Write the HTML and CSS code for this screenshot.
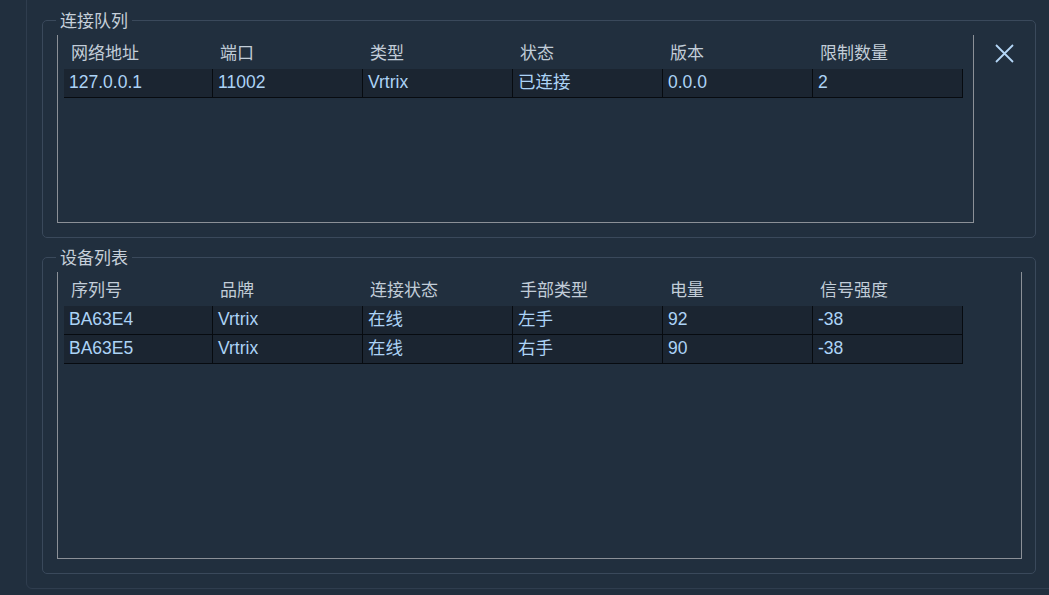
FILE: index.html
```html
<!DOCTYPE html>
<html lang="zh">
<head>
<meta charset="utf-8">
<title>连接队列</title>
<link rel="stylesheet" href="styles.css">
</head>
<body>
<div class="page">
  <div class="frame">
    <fieldset class="group group-queue">
      <legend>连接队列</legend>
      <div class="group-body">
        <div class="table-box box-queue">
          <div class="grid head">
            <div class="hcell">网络地址</div>
            <div class="hcell">端口</div>
            <div class="hcell">类型</div>
            <div class="hcell">状态</div>
            <div class="hcell">版本</div>
            <div class="hcell">限制数量</div>
          </div>
          <div class="grid row">
            <div class="cell">127.0.0.1</div>
            <div class="cell">11002</div>
            <div class="cell">Vrtrix</div>
            <div class="cell">已连接</div>
            <div class="cell">0.0.0</div>
            <div class="cell">2</div>
          </div>
        </div>
        <button class="close" type="button" aria-label="关闭">
          <svg width="19" height="19" viewBox="0 0 19 19"><path d="M1 1 L18 18 M18 1 L1 18" stroke="#b4d6f6" stroke-width="1.8" fill="none"/></svg>
        </button>
      </div>
    </fieldset>
    <fieldset class="group group-devices">
      <legend>设备列表</legend>
      <div class="group-body">
        <div class="table-box box-devices">
          <div class="grid head">
            <div class="hcell">序列号</div>
            <div class="hcell">品牌</div>
            <div class="hcell">连接状态</div>
            <div class="hcell">手部类型</div>
            <div class="hcell">电量</div>
            <div class="hcell">信号强度</div>
          </div>
          <div class="grid row">
            <div class="cell">BA63E4</div>
            <div class="cell">Vrtrix</div>
            <div class="cell">在线</div>
            <div class="cell">左手</div>
            <div class="cell">92</div>
            <div class="cell">-38</div>
          </div>
          <div class="grid row">
            <div class="cell">BA63E5</div>
            <div class="cell">Vrtrix</div>
            <div class="cell">在线</div>
            <div class="cell">右手</div>
            <div class="cell">90</div>
            <div class="cell">-38</div>
          </div>
        </div>
      </div>
    </fieldset>
  </div>
</div>
</body>
</html>
```
FILE: styles.css
```css
html, body {
  margin: 0;
  padding: 0;
  background: #212f3e;
  overflow: hidden;
}

body {
  font-family: "Liberation Sans", "Noto Sans CJK SC", sans-serif;
  font-size: 17px;
}

.page {
  width: 1049px;
  height: 595px;
  padding-left: 26px;
  box-sizing: border-box;
  overflow: hidden;
}

.frame {
  margin-top: -10px;
  width: 1030px;
  border: 1px solid #2f3d4e;
  border-radius: 6px;
  padding: 19px 0 14px 15px;
  box-sizing: border-box;
}

.group {
  margin: 0;
  width: 994px;
  box-sizing: border-box;
  border: 1px solid #3a495b;
  border-radius: 5px;
  padding: 5px 13px 14px 14px;
  min-width: 0;
}

.group-devices {
  margin-top: 9px;
}

.group legend {
  margin-left: -1px;
  padding: 0 4px;
  font-family: "Noto Sans CJK SC", sans-serif;
  font-size: 17px;
  line-height: 20px;
  color: #c6d0da;
}

.group-body {
  display: flex;
  align-items: flex-start;
}

.table-box {
  border: 1px solid #8b9097;
  border-top: none;
  box-sizing: border-box;
  padding-left: 6px;
}

.box-queue {
  width: 917px;
  height: 188px;
}

.box-devices {
  width: 965px;
  height: 287px;
}

.grid {
  display: grid;
  grid-template-columns: 149px repeat(5, 150px);
}

.hcell {
  height: 34px;
  line-height: 34px;
  padding-left: 7px;
  font-family: "Noto Sans CJK SC", sans-serif;
  color: #c2cdd8;
  white-space: nowrap;
}

.cell {
  height: 29px;
  box-sizing: border-box;
  padding: 0 0 2px 5px;
  line-height: 26px;
  font-size: 17.5px;
  background: #1b2531;
  border-right: 1px solid #070b10;
  border-bottom: 1px solid #070b10;
  color: #acd3f6;
  white-space: nowrap;
}

.close {
  flex: 1;
  display: flex;
  justify-content: center;
  padding: 9px 0 0 0;
  margin: 0 -13px 0 0;
  border: none;
  background: none;
  cursor: pointer;
}

.close svg {
  display: block;
}
```
